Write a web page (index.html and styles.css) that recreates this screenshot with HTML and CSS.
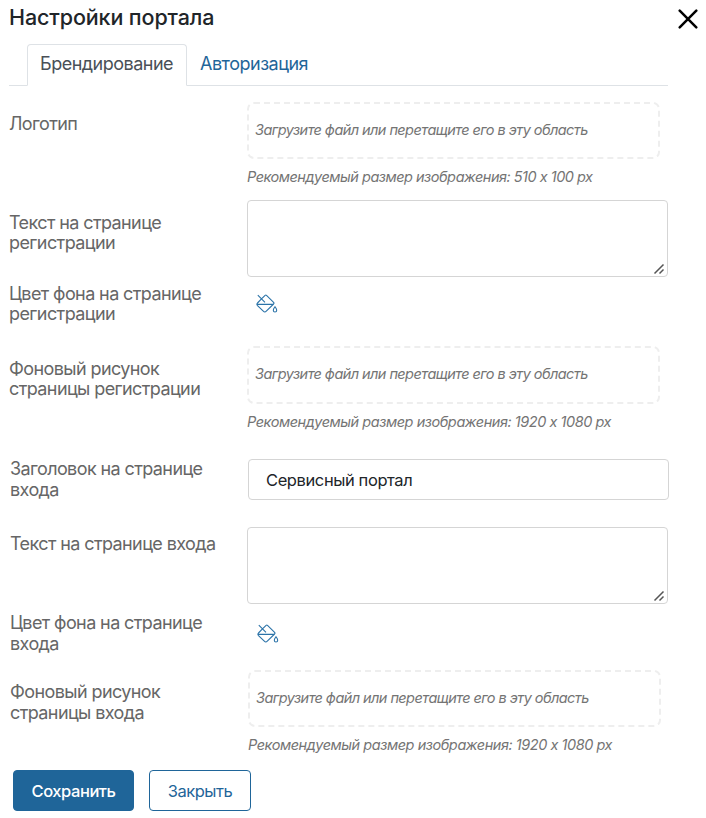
FILE: index.html
```html
<!DOCTYPE html>
<html lang="ru">
<head>
<meta charset="utf-8">
<title>Настройки портала</title>
<link rel="stylesheet" href="styles.css">
</head>
<body>
<svg class="defs" width="0" height="0" aria-hidden="true">
  <symbol id="fill" viewBox="0 0 22 20">
    <path d="M1.8 1.2 9 8.4M5.2 5.2 9.1 1.3Q9.8.7 10.5 1.3L17.6 8.4Q18.3 9.2 17.6 10L10.3 17.2Q8.8 18.7 7.3 17.2L1.5 11.6Q.3 10.3 1.5 9L5.2 5.2M.8 10.4H17.2M19 12.7C18.1 14 17.3 14.9 17.3 16.2a1.7 1.8 0 0 0 3.4 0C20.7 14.9 19.9 14 19 12.7Z"/>
  </symbol>
  <symbol id="grip" viewBox="0 0 12 12">
    <path d="M1.5 10.5 10.5 1.5M6.5 10.5 10.5 6.5"/>
  </symbol>
</svg>
<main class="dialog">
  <header class="header">
    <h1 class="title">Настройки портала</h1>
    <button class="close" aria-label="Закрыть"><svg viewBox="0 0 20 20"><path d="M1.7 1.7 18.3 18.3M18.3 1.7 1.7 18.3"/></svg></button>
  </header>
  <nav class="tabs">
    <a class="tab tab-active">Брендирование</a>
    <a class="tab">Авторизация</a>
  </nav>
  <form class="form">
    <div class="row row-logo">
      <label class="label">Логотип</label>
      <div class="control">
        <div class="drop">Загрузите файл или перетащите его в эту область</div>
        <p class="note note-short">Рекомендуемый размер изображения: 510 x 100 px</p>
      </div>
    </div>
    <div class="row row-reg-text">
      <label class="label">Текст на странице<br>регистрации</label>
      <div class="control"><div class="area"><svg class="grip"><use href="#grip"/></svg></div></div>
    </div>
    <div class="row row-reg-color">
      <label class="label">Цвет фона на странице<br>регистрации</label>
      <div class="control"><svg class="fill"><use href="#fill"/></svg></div>
    </div>
    <div class="row row-reg-image">
      <label class="label">Фоновый рисунок<br>страницы регистрации</label>
      <div class="control">
        <div class="drop drop-tall">Загрузите файл или перетащите его в эту область</div>
        <p class="note">Рекомендуемый размер изображения: 1920 x 1080 px</p>
      </div>
    </div>
    <div class="row row-shift row-login-title">
      <label class="label">Заголовок на странице<br>входа</label>
      <div class="control"><input class="input" type="text" value="Сервисный портал"></div>
    </div>
    <div class="row row-login-text">
      <label class="label">Текст на странице входа</label>
      <div class="control"><div class="area"><svg class="grip"><use href="#grip"/></svg></div></div>
    </div>
    <div class="row row-shift row-login-color">
      <label class="label">Цвет фона на странице<br>входа</label>
      <div class="control"><svg class="fill"><use href="#fill"/></svg></div>
    </div>
    <div class="row row-shift row-login-image">
      <label class="label">Фоновый рисунок<br>страницы входа</label>
      <div class="control">
        <div class="drop">Загрузите файл или перетащите его в эту область</div>
        <p class="note">Рекомендуемый размер изображения: 1920 x 1080 px</p>
      </div>
    </div>
    <div class="actions">
      <button class="btn btn-primary" type="button">Сохранить</button>
      <button class="btn btn-outline" type="button">Закрыть</button>
    </div>
  </form>
</main>
</body>
</html>
```
FILE: styles.css
```css
* { box-sizing: border-box; }
body {
  margin: 0;
  background: #fff;
  font-family: Inter, "Liberation Sans", sans-serif;
  color: #212529;
}
.defs { display: block; }
.dialog { width: 706px; height: 818px; overflow: hidden; padding-left: 9px; }
.header {
  display: flex;
  justify-content: space-between;
  height: 44px;
  padding: 4px 8px 0 0;
}
.title { margin: 0; font-size: 21.5px; font-weight: 500; line-height: 26px; letter-spacing: -.12px; }
.close { width: 20px; height: 20px; margin-top: 5px; padding: 0; border: 0; background: none; }
.close svg { display: block; width: 20px; height: 20px; fill: none; stroke: #000; stroke-width: 2.5; stroke-linecap: round; }
.tabs {
  display: flex;
  width: 659px;
  height: 42px;
  padding-left: 18px;
  border-bottom: 1px solid #dee2e6;
}
.tab {
  height: 42px;
  padding: 0 12px;
  border: 1px solid transparent;
  font-size: 18px;
  line-height: 37px;
  letter-spacing: -.5px;
  color: #1f6599;
}
.tab-active {
  width: 160px;
  border-color: #dee2e6 #dee2e6 #fff;
  border-radius: 4px 4px 0 0;
  background: #fff;
  color: #495057;
}
.form { padding-top: 16px; }
.row { display: grid; grid-template-columns: 238px 421px; }
.row-logo { height: 98px; }
.row-reg-text { height: 83px; }
.row-reg-color { height: 63px; }
.row-reg-image { height: 113px; }
.row-login-title { height: 68px; }
.row-login-text { height: 85px; }
.row-login-color { height: 58px; }
.row-login-image { height: 100px; }
.row-shift { margin-left: 1px; }
.label {
  font-size: 18px;
  line-height: 20px;
  letter-spacing: -.6px;
  color: #666;
}
.row-shift .label { line-height: 21px; }
.row-logo .label { padding-top: 12px; }
.row-reg-text .label { padding-top: 13px; }
.row-reg-color .label { padding-top: 1px; }
.row-reg-image .label { padding-top: 13px; }
.row-login-title .label { margin-top: -1px; }
.row-login-text .label { padding: 7px 0 0 1px; }
.row-login-image .label { padding-top: 11px; }
.drop {
  width: 413px;
  height: 57px;
  padding-left: 6px;
  border: 2px dashed #eee;
  border-radius: 7px;
  font-size: 14.5px;
  font-style: italic;
  line-height: 51px;
  letter-spacing: -.57px;
  color: #747474;
}
.drop-tall { height: 58px; }
.note { margin: 9px 0 0; font-size: 14.5px; font-style: italic; line-height: 18px; letter-spacing: -.46px; color: #747474; }
.note-short { letter-spacing: -.49px; }
.area {
  display: flex;
  align-items: flex-end;
  justify-content: flex-end;
  height: 77px;
  padding: 0 2px 1px 0;
  border: 1px solid #d5d5d5;
  border-radius: 4px;
}
.grip { width: 12px; height: 12px; fill: none; stroke: #555; stroke-width: 1.5; }
.fill { display: block; width: 22px; height: 20px; margin: 11px 0 0 9px; fill: none; stroke: #2b73a8; stroke-width: 1.1; }
.row-login-color .fill { margin-top: 12px; }
.input {
  display: block;
  width: 421px;
  height: 41px;
  padding: 1px 17px 0;
  border: 1px solid #d5d5d5;
  border-radius: 4px;
  background: #fff;
  font: 16.5px Inter, sans-serif;
  letter-spacing: -.4px;
  color: #212529;
}
.actions { display: flex; gap: 15px; padding-left: 4px; }
.btn {
  height: 41px;
  padding: 1px 0 0;
  border: 1px solid #1f6599;
  border-radius: 4px;
  font: 16.5px Inter, sans-serif;
  letter-spacing: -.45px;
}
.btn-primary { width: 121px; background: #1f6599; font-weight: 500; color: #fff; }
.btn-outline { width: 102px; background: #fff; color: #1f6599; }
```
